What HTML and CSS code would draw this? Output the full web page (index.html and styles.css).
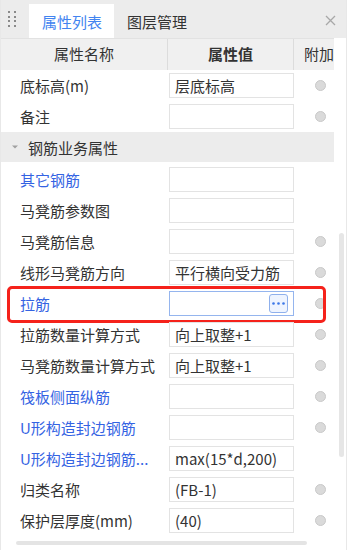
FILE: index.html
```html
<!DOCTYPE html>
<html lang="zh">
<head>
    <meta charset="UTF-8">
    <title>属性列表</title>
    <link rel="stylesheet" href="styles.css">
</head>
<body>
    <div class="panel">
        <div class="tabbar">
            <div class="grip">
                <span></span><span></span><span></span><span></span>
                <span></span><span></span><span></span><span></span>
            </div>
            <div class="tab active">属性列表</div>
            <div class="tab">图层管理</div>
            <div class="close">
                <svg width="11" height="11" viewBox="0 0 11 11"><path d="M1 1L10 10M10 1L1 10" stroke="#a8a8a8" stroke-width="1.3"/></svg>
            </div>
        </div>
        <div class="head">
            <div class="hcell">属性名称</div>
            <div class="hcell strong">属性值</div>
            <div class="hcell extra">附加</div>
        </div>
        <div class="body">
            <div class="rows">
                <div class="row">
                    <div class="name">底标高(m)</div>
                    <div class="val"><div class="box">层底标高</div></div>
                    <div class="add"><span class="dot"></span></div>
                </div>
                <div class="row">
                    <div class="name">备注</div>
                    <div class="val"><div class="box"></div></div>
                    <div class="add"><span class="dot"></span></div>
                </div>
                <div class="group">
                    <svg width="8" height="6" viewBox="0 0 8 6"><polygon points="1,1.5 7,1.5 4,4.5" fill="#a0a0a0"/></svg>
                    <span>钢筋业务属性</span>
                </div>
                <div class="row">
                    <div class="name link">其它钢筋</div>
                    <div class="val"><div class="box"></div></div>
                    <div class="add"></div>
                </div>
                <div class="row">
                    <div class="name">马凳筋参数图</div>
                    <div class="val"><div class="box"></div></div>
                    <div class="add"></div>
                </div>
                <div class="row">
                    <div class="name">马凳筋信息</div>
                    <div class="val"><div class="box"></div></div>
                    <div class="add"><span class="dot"></span></div>
                </div>
                <div class="row">
                    <div class="name">线形马凳筋方向</div>
                    <div class="val"><div class="box">平行横向受力筋</div></div>
                    <div class="add"><span class="dot"></span></div>
                </div>
                <div class="row marked">
                    <div class="name link">拉筋</div>
                    <div class="val">
                        <div class="box focus">
                            <span class="more">
                                <svg width="13" height="3" viewBox="0 0 13 3"><circle cx="1.5" cy="1.5" r="1.3" fill="#3b77e8"/><circle cx="6.5" cy="1.5" r="1.3" fill="#3b77e8"/><circle cx="11.5" cy="1.5" r="1.3" fill="#3b77e8"/></svg>
                            </span>
                        </div>
                    </div>
                    <div class="add"><span class="dot"></span></div>
                    <div class="mark"></div>
                </div>
                <div class="row">
                    <div class="name">拉筋数量计算方式</div>
                    <div class="val"><div class="box">向上取整+1</div></div>
                    <div class="add"><span class="dot"></span></div>
                </div>
                <div class="row">
                    <div class="name">马凳筋数量计算方式</div>
                    <div class="val"><div class="box">向上取整+1</div></div>
                    <div class="add"><span class="dot"></span></div>
                </div>
                <div class="row">
                    <div class="name link">筏板侧面纵筋</div>
                    <div class="val"><div class="box"></div></div>
                    <div class="add"><span class="dot"></span></div>
                </div>
                <div class="row">
                    <div class="name link">U形构造封边钢筋</div>
                    <div class="val"><div class="box"></div></div>
                    <div class="add"><span class="dot"></span></div>
                </div>
                <div class="row">
                    <div class="name link">U形构造封边钢筋...</div>
                    <div class="val"><div class="box">max(15*d,200)</div></div>
                    <div class="add"></div>
                </div>
                <div class="row">
                    <div class="name">归类名称</div>
                    <div class="val"><div class="box">(FB-1)</div></div>
                    <div class="add"><span class="dot"></span></div>
                </div>
                <div class="row">
                    <div class="name">保护层厚度(mm)</div>
                    <div class="val"><div class="box">(40)</div></div>
                    <div class="add"><span class="dot"></span></div>
                </div>
            </div>
            <div class="gutter"><div class="thumb"></div></div>
        </div>
        <div class="hbar"><div class="hthumb"></div></div>
    </div>
</body>
</html>
```

FILE: styles.css
```css
body {
    margin: 0;
    background: #fff;
    font-family: "Noto Sans CJK SC", "Noto Sans", sans-serif;
    font-size: 15px;
    color: #333;
}
.panel {
    box-sizing: border-box;
    width: 347px;
    height: 550px;
    border-left: 1px solid #e8e8e8;
    border-right: 1px solid #e8e8e8;
    display: flex;
    flex-direction: column;
    overflow: hidden;
}
.tabbar {
    height: 38px;
    background: #ececec;
    display: flex;
    align-items: flex-end;
    flex-shrink: 0;
}
.grip {
    width: 8px;
    height: 16px;
    margin: 0 13px 0 7px;
    align-self: center;
    display: grid;
    grid-template-columns: 2px 2px;
    grid-auto-rows: 2px;
    column-gap: 4px;
    row-gap: 2.5px;
}
.grip span {
    width: 2px;
    height: 2px;
    background: #8a8a8a;
}
.tab {
    height: 34px;
    line-height: 36px;
    padding: 0 12px 0 13px;
}
.tab.active {
    background: #fff;
    color: #4284f0;
}
.close {
    margin-left: auto;
    margin-right: 10px;
    align-self: center;
    display: flex;
    padding-top: 3px;
}
.head {
    width: 333px;
    height: 31px;
    display: grid;
    grid-template-columns: 167px 126px 40px;
    background: #f0f0f0;
    border-top: 1px solid #e2e2e2;
    flex-shrink: 0;
}
.hcell {
    text-align: center;
    line-height: 30px;
    border-right: 1px solid #dcdcdc;
    white-space: nowrap;
    overflow: hidden;
}
.hcell.strong {
    font-weight: bold;
}
.hcell.extra {
    border-right: none;
    text-align: left;
    padding-left: 10px;
}
.body {
    flex: 1;
    display: flex;
    overflow: hidden;
}
.rows {
    width: 333px;
    flex-shrink: 0;
}
.row {
    position: relative;
    height: 31px;
    display: grid;
    grid-template-columns: 167px 126px 40px;
    align-items: center;
}
.name {
    padding-left: 19px;
    white-space: nowrap;
}
.name.link {
    color: #3463e3;
}
.box {
    box-sizing: border-box;
    width: 125px;
    height: 25px;
    margin-left: 1px;
    border: 1px solid #e3e3e3;
    padding-left: 5px;
    line-height: 23px;
    white-space: nowrap;
    display: flex;
    align-items: center;
}
.box.focus {
    border-color: #95b5ee;
    justify-content: flex-end;
    padding-right: 5px;
}
.more {
    box-sizing: border-box;
    width: 19px;
    height: 19px;
    border: 1px solid #8fb0ec;
    border-radius: 3px;
    background: #eef4ff;
    display: flex;
    align-items: center;
    justify-content: center;
}
.add {
    display: flex;
    justify-content: center;
    padding-left: 13px;
    box-sizing: border-box;
}
.dot {
    box-sizing: border-box;
    width: 11px;
    height: 11px;
    border-radius: 50%;
    border: 1px solid #c9c9c9;
    background: #dadada;
}
.group {
    height: 30px;
    margin-bottom: 2px;
    background: #ececec;
    display: flex;
    align-items: center;
    gap: 9px;
    padding-left: 10px;
}
.mark {
    position: absolute;
    left: 6px;
    top: -2px;
    width: 319px;
    height: 37px;
    box-sizing: border-box;
    border: 3px solid #f5221b;
    border-radius: 5px;
}
.gutter {
    flex: 1;
}
.thumb {
    width: 5px;
    height: 224px;
    margin: 163px 0 0 5px;
    background: #e6e6e6;
    border-radius: 3px;
}
.hbar {
    height: 14px;
    flex-shrink: 0;
    padding-top: 5px;
    box-sizing: border-box;
}
.hthumb {
    width: 291px;
    height: 4px;
    margin-left: 15px;
    background: #e4e4e4;
    border-radius: 2px;
}
```
